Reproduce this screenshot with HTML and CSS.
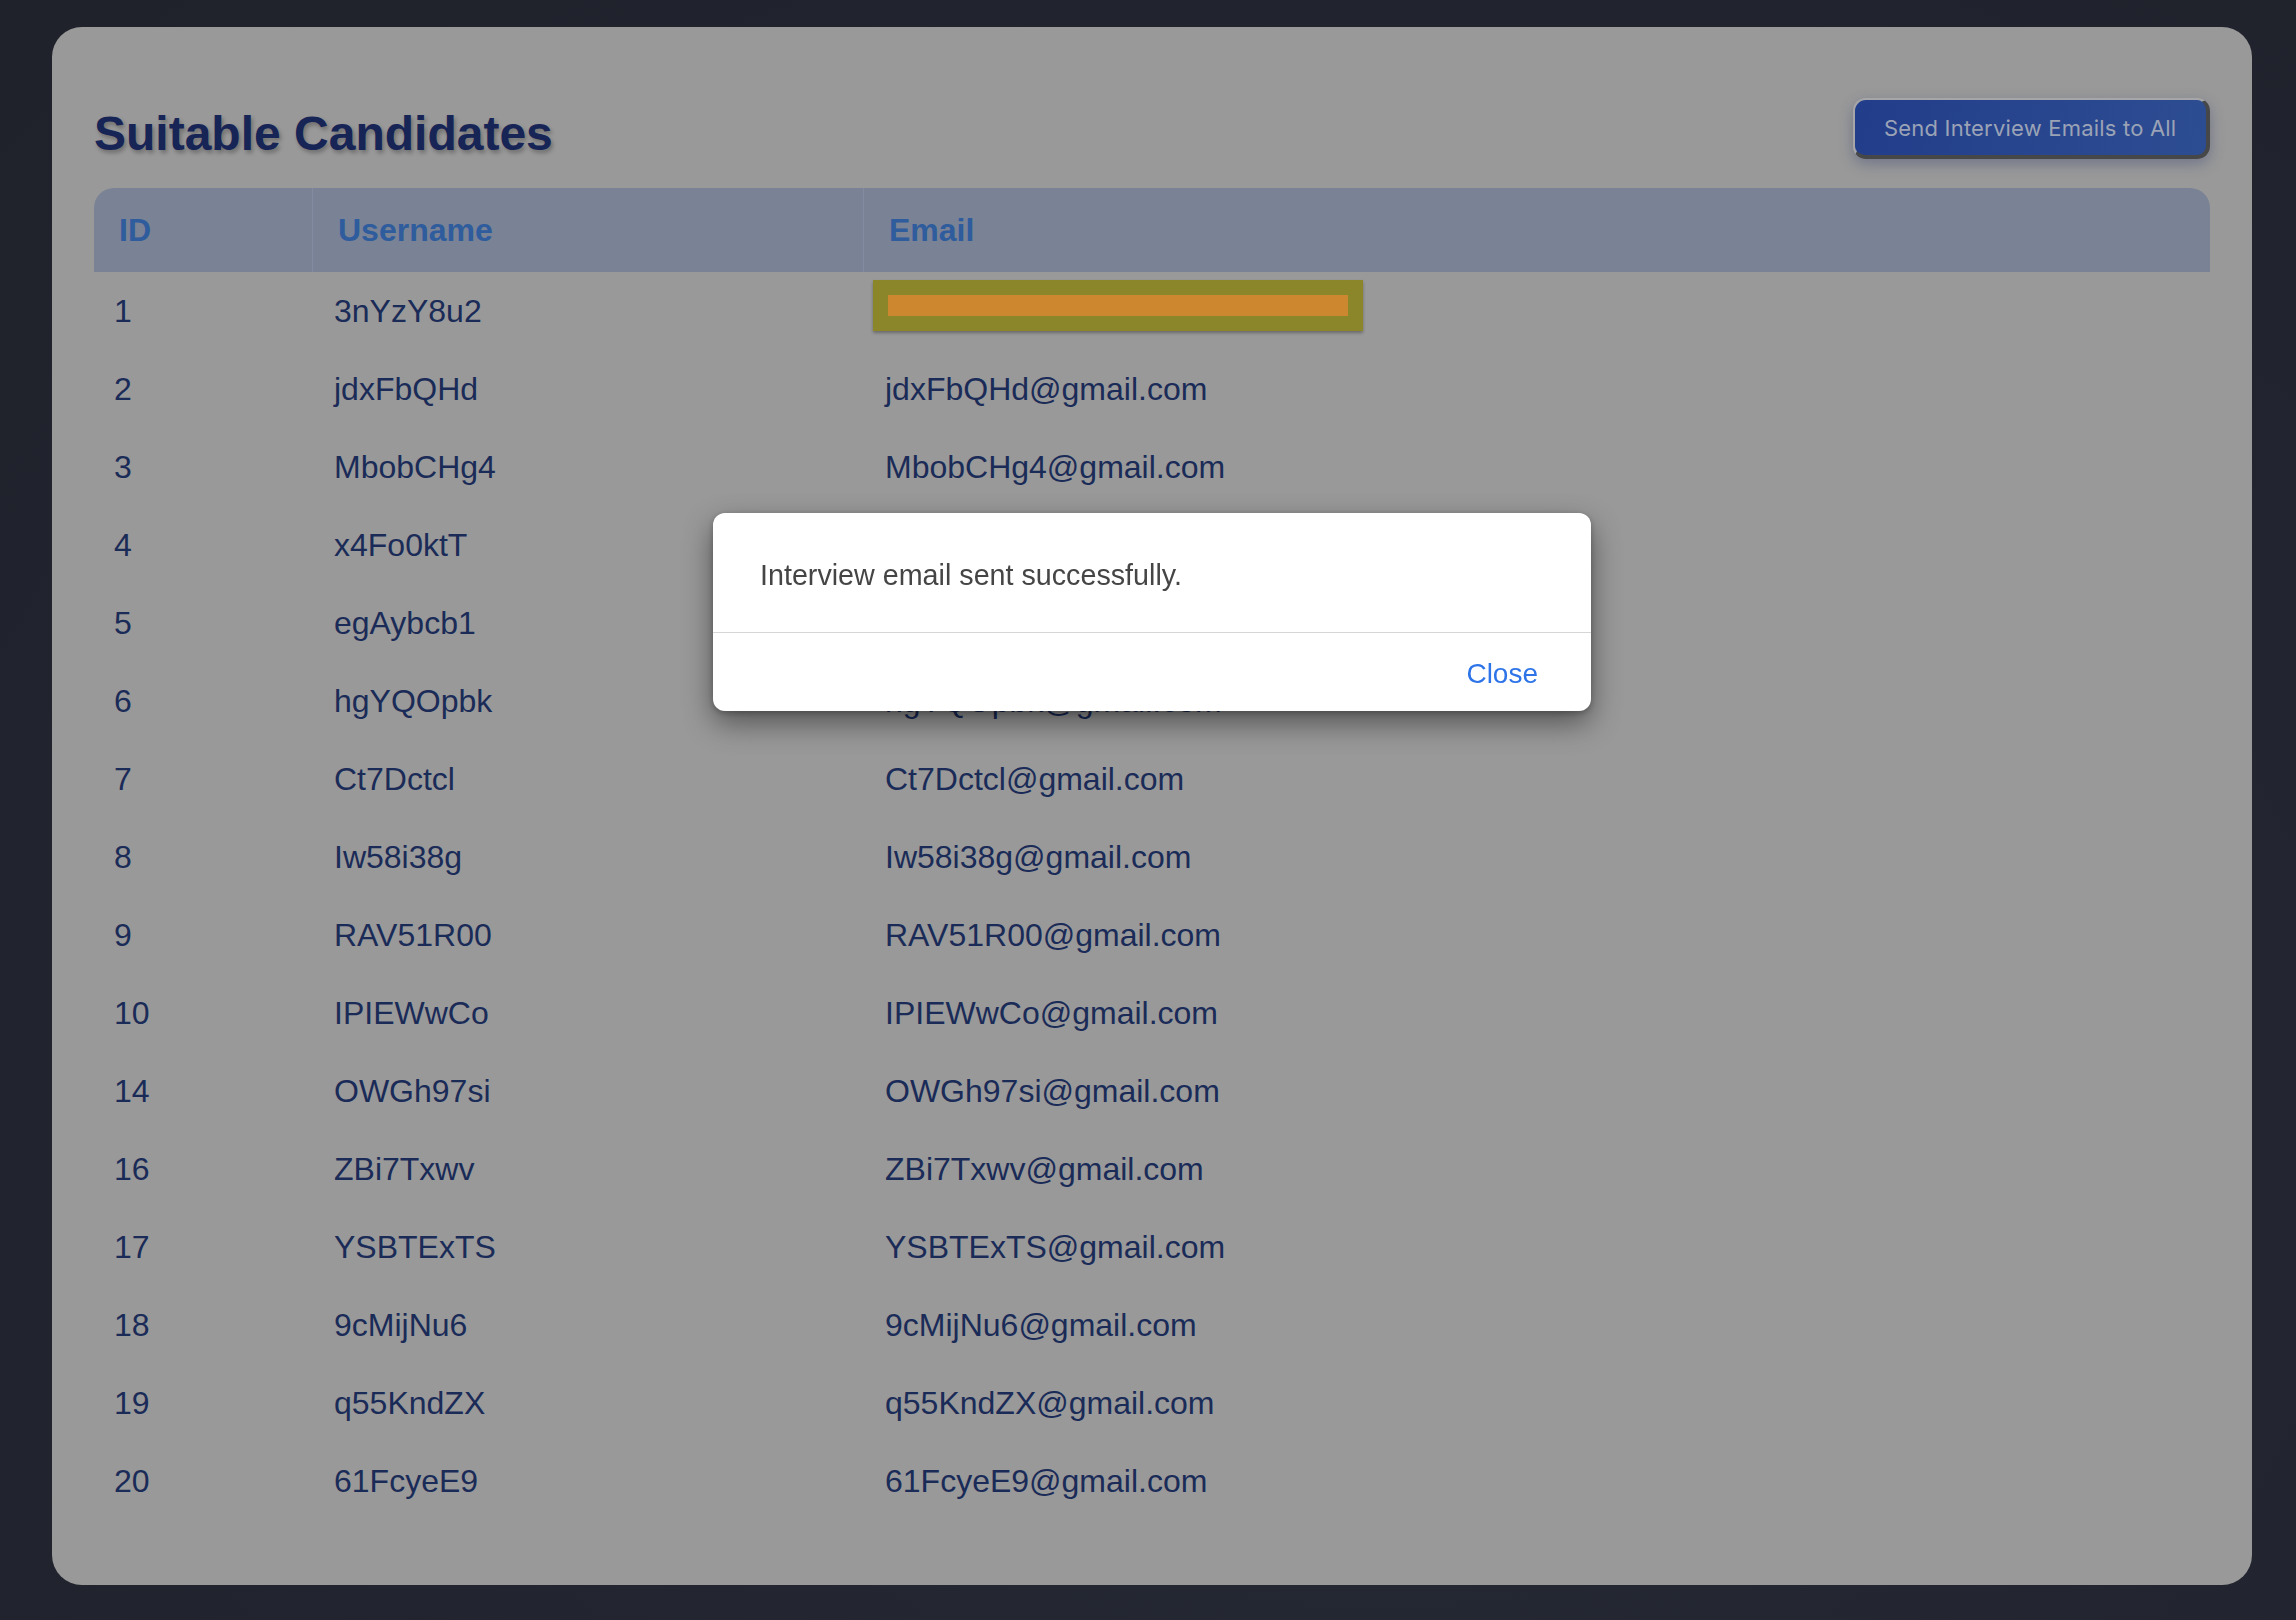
FILE: index.html
```html
<!DOCTYPE html>
<html lang="en">
<head>
<meta charset="utf-8">
<title>Suitable Candidates</title>
<link rel="stylesheet" href="styles.css">
</head>
<body>
<main class="page">
  <section class="card">
    <div class="card-head">
      <h1 class="title">Suitable Candidates</h1>
      <button class="send-btn" type="button">Send Interview Emails to All</button>
    </div>
    <table class="candidates">
      <colgroup>
        <col class="c-id">
        <col class="c-user">
        <col class="c-email">
      </colgroup>
      <thead>
        <tr><th>ID</th><th>Username</th><th>Email</th></tr>
      </thead>
      <tbody>
        <tr><td>1</td><td>3nYzY8u2</td><td><span class="redact"><span class="redact-inner"></span></span></td></tr>
        <tr><td>2</td><td>jdxFbQHd</td><td>jdxFbQHd@gmail.com</td></tr>
        <tr><td>3</td><td>MbobCHg4</td><td>MbobCHg4@gmail.com</td></tr>
        <tr><td>4</td><td>x4Fo0ktT</td><td>x4Fo0ktT@gmail.com</td></tr>
        <tr><td>5</td><td>egAybcb1</td><td>egAybcb1@gmail.com</td></tr>
        <tr><td>6</td><td>hgYQOpbk</td><td>hgYQOpbk@gmail.com</td></tr>
        <tr><td>7</td><td>Ct7Dctcl</td><td>Ct7Dctcl@gmail.com</td></tr>
        <tr><td>8</td><td>Iw58i38g</td><td>Iw58i38g@gmail.com</td></tr>
        <tr><td>9</td><td>RAV51R00</td><td>RAV51R00@gmail.com</td></tr>
        <tr><td>10</td><td>IPIEWwCo</td><td>IPIEWwCo@gmail.com</td></tr>
        <tr><td>14</td><td>OWGh97si</td><td>OWGh97si@gmail.com</td></tr>
        <tr><td>16</td><td>ZBi7Txwv</td><td>ZBi7Txwv@gmail.com</td></tr>
        <tr><td>17</td><td>YSBTExTS</td><td>YSBTExTS@gmail.com</td></tr>
        <tr><td>18</td><td>9cMijNu6</td><td>9cMijNu6@gmail.com</td></tr>
        <tr><td>19</td><td>q55KndZX</td><td>q55KndZX@gmail.com</td></tr>
        <tr><td>20</td><td>61FcyeE9</td><td>61FcyeE9@gmail.com</td></tr>
      </tbody>
    </table>
  </section>
</main>

<div class="overlay">
  <div class="modal" role="dialog">
    <div class="modal-body">Interview email sent successfully.</div>
    <div class="modal-foot"><button class="close-btn" type="button">Close</button></div>
  </div>
</div>
</body>
</html>
```

FILE: styles.css
```css
html, body {
  margin: 0;
  padding: 0;
}

body {
  width: 2296px;
  height: 1620px;
  overflow: hidden;
  background: radial-gradient(ellipse at 60% 70%, #262a34 0%, #22252f 55%, #1f222b 100%);
  font-family: "Liberation Sans", Arial, sans-serif;
}

.page {
  box-sizing: border-box;
  height: 1620px;
  padding: 27px 44px 35px 52px;
}

.card {
  box-sizing: border-box;
  height: 1558px;
  background: #999999;
  border-radius: 30px;
  padding: 71px 42px 65px 42px;
}

.card-head {
  display: flex;
  justify-content: space-between;
  align-items: flex-start;
}

.title {
  margin: 7px 0 0 0;
  font-family: "Liberation Sans", Arial, sans-serif;
  font-weight: 700;
  font-size: 48px;
  line-height: 58px;
  color: #172456;
  text-shadow: 2px 3px 4px rgba(0, 0, 0, 0.28);
}

.send-btn {
  box-sizing: border-box;
  width: 357px;
  height: 61px;
  padding: 0 0 0 29px;
  text-align: left;
  border-style: solid;
  border-width: 2px 4px 4px 2px;
  border-color: #a6a6a8 #464749 #464749 #a6a6a8;
  border-radius: 13px;
  background: linear-gradient(100deg, #223d8a 0%, #2d4d92 100%);
  color: #9ba3b6;
  font-family: Inter, "Liberation Sans", sans-serif;
  font-size: 22px;
  font-weight: 400;
  letter-spacing: 0.2px;
  box-shadow: 0 5px 14px rgba(40, 55, 110, 0.35);
}

.candidates {
  width: 2116px;
  margin-top: 25px;
  border-collapse: separate;
  border-spacing: 0;
  table-layout: fixed;
}

.c-id { width: 218px; }
.c-user { width: 551px; }

.candidates th {
  height: 84px;
  padding: 0 25px;
  box-sizing: border-box;
  background: #7a8296;
  color: #2e5c9c;
  font-family: "Liberation Sans", Arial, sans-serif;
  font-weight: 700;
  font-size: 32px;
  line-height: 1;
  text-align: left;
  vertical-align: middle;
}

.candidates th + th {
  border-left: 1px solid #838ba0;
}

.candidates th:first-child { border-top-left-radius: 20px; }
.candidates th:last-child { border-top-right-radius: 20px; }

.candidates td {
  height: 78px;
  padding: 0 21px 0 22px;
  box-sizing: border-box;
  color: #1a2b58;
  font-size: 32px;
  line-height: 37px;
  vertical-align: middle;
  white-space: nowrap;
}

.candidates td:first-child { padding-left: 20px; }

.redact {
  display: inline-block;
  vertical-align: middle;
  width: 490px;
  height: 51px;
  box-sizing: border-box;
  margin: 0 0 11px -12px;
  padding: 15px;
  background: #8b8629;
  box-shadow: 0 2px 3px rgba(0, 0, 0, 0.3);
}

.redact-inner {
  display: block;
  height: 21px;
  background: #cc872f;
}

.overlay {
  position: fixed;
  inset: 0;
  display: flex;
  justify-content: center;
  align-items: flex-start;
  padding: 513px 0 0 8px;
  box-sizing: border-box;
}

.modal {
  width: 878px;
  background: #ffffff;
  border-radius: 12px;
  box-shadow: 0 12px 30px rgba(0, 0, 0, 0.45), 0 2px 6px rgba(0, 0, 0, 0.25);
  font-family: "Liberation Sans", Arial, sans-serif;
}

.modal-body {
  padding: 47px 47px 41px 47px;
  font-size: 28.7px;
  line-height: 31px;
  color: #454545;
}

.modal-foot {
  display: flex;
  justify-content: flex-end;
  border-top: 1px solid #d6d6d6;
  padding: 25px 53px 22px 0;
}

.close-btn {
  border: 0;
  background: none;
  padding: 0;
  font-family: "Liberation Sans", Arial, sans-serif;
  font-size: 28px;
  line-height: 31px;
  color: #2d74e8;
}
```
